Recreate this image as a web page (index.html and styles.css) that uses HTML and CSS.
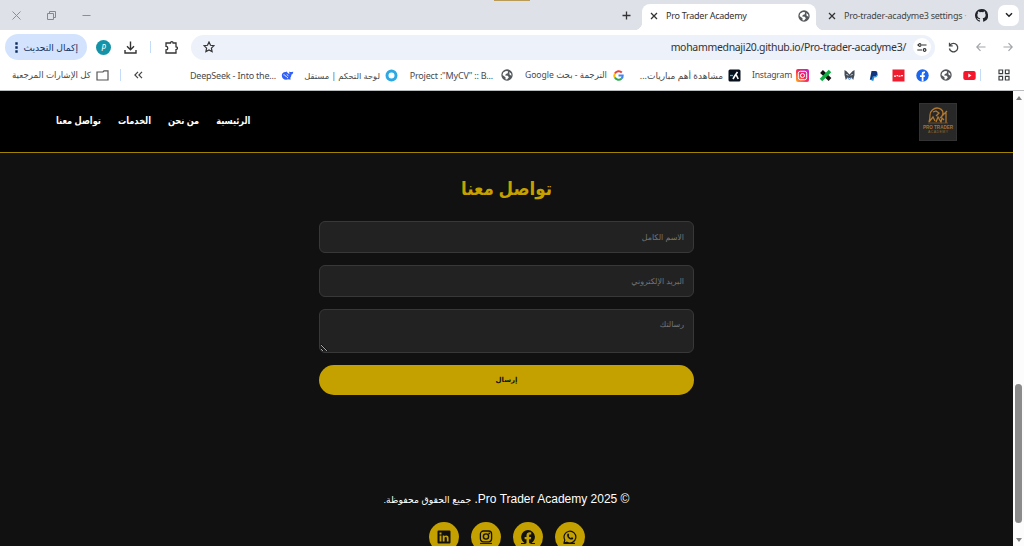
FILE: index.html
```html
<!DOCTYPE html>
<html lang="ar" dir="rtl">
	<head>
		<meta charset="UTF-8">
		<title>Pro Trader Academy</title>
		<link rel="stylesheet" href="styles.css">
	</head>
	<body>
		<svg class="defs">
			<symbol id="globe" viewBox="0 0 16 16">
				<circle cx="8" cy="8" r="7.6" fill="#54585c"/>
				<path d="M3 4.500 6.500 2.500l3 .5-.5 2.500-2.500 1-1 2 3.500.5 1.500 2-2.500 3-2-.5v-2.500L2 8zM11 4l2.500 2 .5 3-2.500-1.500z" fill="#fff"/>
			</symbol>
			<symbol id="close" viewBox="0 0 8 8">
				<path d="M1 1l6 6M7 1 1 7" fill="none" stroke="#333" stroke-width="1.300"/>
			</symbol>
		</svg>

		<!-- 标签栏 -->
		<div class="tabs">
			<div class="tab-menu"><svg width="8" height="6" viewBox="0 0 8 6"><path d="M1 1.200l3 3 3-3" fill="none" stroke="#222" stroke-width="1.500"/></svg></div>
			<div class="tab">
				<svg width="13" height="13" viewBox="0 0 16 16"><path fill="#202428" d="M8 0C3.600 0 0 3.600 0 8c0 3.500 2.300 6.500 5.500 7.600.4.100.5-.2.5-.4v-1.500c-2.200.5-2.700-1-2.700-1-.4-.9-.9-1.200-.9-1.200-.7-.5.100-.5.100-.5.800.1 1.200.8 1.200.8.7 1.200 1.900.9 2.300.7.100-.5.300-.9.500-1.100-1.800-.2-3.600-.9-3.600-4 0-.9.300-1.600.8-2.100-.1-.2-.4-1 .1-2.100 0 0 .7-.2 2.200.8a7.500 7.500 0 0 1 4 0c1.500-1 2.200-.8 2.200-.8.4 1.100.2 1.900.1 2.100.5.6.8 1.300.8 2.100 0 3.100-1.900 3.700-3.700 3.900.3.300.6.800.6 1.500v2.400c0 .2.100.5.600.4A8 8 0 0 0 8 0z"/></svg>
				<span class="tab-name fade">Pro-trader-acadyme3 settings <i>·</i></span>
				<svg width="8" height="8"><use href="#close"/></svg>
			</div>
			<div class="tab active">
				<svg width="12" height="12"><use href="#globe"/></svg>
				<span class="tab-name">Pro Trader Academy</span>
				<svg width="8" height="8"><use href="#close"/></svg>
			</div>
			<svg class="plus" width="9" height="9" viewBox="0 0 9 9"><path d="M4.500.5v8M.5 4.500h8" stroke="#333" stroke-width="1.300"/></svg>
			<div class="top-strip"></div>
			<div class="win">
				<svg width="9" height="9" viewBox="0 0 9 9"><path d="M.5 4.500h8" stroke="#8a8f95"/></svg>
				<svg width="9" height="9" viewBox="0 0 9 9"><path d="M.5 2.500h6v6h-6zM2.500 2.500v-2h6v6h-2" fill="none" stroke="#85898e"/></svg>
				<svg width="9" height="9" viewBox="0 0 9 9"><path d="M.5.5l8 8M8.500.5l-8 8" stroke="#8a8f95"/></svg>
			</div>
		</div>

		<!-- 地址栏 -->
		<div class="toolbar">
			<svg width="10" height="10" viewBox="0 0 10 10"><path d="M.5 5h8.500M5.500 1.200 9.200 5 5.500 8.800" fill="none" stroke="#a2a5a9" stroke-width="1.200"/></svg>
			<svg width="10" height="10" viewBox="0 0 10 10"><path d="M9.500 5H1M4.500 1.200.8 5l3.700 3.800" fill="none" stroke="#a2a5a9" stroke-width="1.200"/></svg>
			<svg width="11" height="11" viewBox="0 0 11 11"><path d="M2.200 3A4.200 4.200 0 1 1 1.400 6.500M1.500.8V3.800h3.200" fill="none" stroke="#44474a" stroke-width="1.300"/></svg>
			<div class="address">
				<div class="site"><svg width="10" height="9" viewBox="0 0 10 9"><path d="M.3 2h1.200M5 2h4.500M.3 7H5" stroke="#333" stroke-width="1.200"/><path d="M1.500 2a1.300 1.300 0 1 0 2.600 0 1.300 1.300 0 1 0-2.600 0M6.300 7a1.300 1.300 0 1 0 2.600 0 1.300 1.300 0 1 0-2.600 0" fill="none" stroke="#333" stroke-width="1.200"/></svg></div>
				<span class="url" dir="ltr">mohammednaji20.github.io/Pro-trader-acadyme3/</span>
				<svg class="star" width="12" height="12" viewBox="0 0 12 12"><path d="M6 1l1.500 3.300 3.500.4-2.600 2.400.7 3.500L6 8.900l-3.100 1.700.7-3.500L1 4.700l3.500-.4z" fill="none" stroke="#333" stroke-width="1.200"/></svg>
			</div>
			<svg class="puzzle" width="13" height="13" viewBox="0 0 13 13"><path d="M1 2h4.500a1.300 1.300 0 0 1 2.600 0H11v3.800a1.400 1.400 0 0 1 0 2.800V12H1V9a1.800 1.800 0 0 0 0-3.600z" fill="none" stroke="#333" stroke-width="1.300"/></svg>
			<i class="bar"></i>
			<svg class="down" width="13" height="13" viewBox="0 0 13 13"><path d="M6.500.5v8M3 5.200l3.500 3.500L10 5.200M1 9v3h11V9" fill="none" stroke="#333" stroke-width="1.400"/></svg>
			<div class="avatar">P</div>
			<div class="update"><span>إكمال التحديث</span><svg width="3" height="11" viewBox="0 0 3 11"><path d="M.3.300h2.400v2.400H.3zM.3 4.300h2.400v2.400H.3zM.3 8.300h2.400v2.400H.3z" fill="#0b2a5c"/></svg></div>
		</div>

		<!-- 书签栏 -->
		<div class="marks">
			<svg class="grid" width="12" height="12" viewBox="0 0 12 12"><path d="M1 1h3.600v3.600H1zM7.400 1H11v3.600H7.400zM1 7.400h3.600V11H1zM7.400 7.400H11V11H7.400z" fill="none" stroke="#3c4043" stroke-width="1.200"/></svg>
			<i class="bar"></i>
			<div class="icons">
				<svg width="13" height="13" viewBox="0 0 13 13"><rect x=".3" y="2" width="12.400" height="9" rx="2" fill="#f5162b"/><path d="M5.300 4.500 8.500 6.500l-3.200 2z" fill="#fff"/></svg>
				<svg width="12" height="12"><use href="#globe"/></svg>
				<svg width="13" height="13" viewBox="0 0 13 13"><circle cx="6.500" cy="6.500" r="6.200" fill="#1a66ee"/><path d="M5.700 12.600V8H4V6.200h1.700V5c0-1.900 1-2.700 3.300-2.400v1.600c-1-.1-1.500.1-1.500.9v1.100H9L8.700 8H7.500v4.600z" fill="#fff"/></svg>
				<svg width="13" height="13" viewBox="0 0 13 13"><rect x=".5" y=".5" width="12" height="12" fill="#ee1c2e"/><path d="M2 7.200h2M4.500 6.700h1.500M6.500 7.200h2M9 6.700h2" stroke="#fff" stroke-width="1.300"/></svg>
				<svg width="13" height="13" viewBox="0 0 13 13"><path d="M4.500 2h3.700c1.700 0 2.500 1.200 2.100 2.900C9.800 7 8.500 7.600 6.500 7.500L5.800 10.800H2.800z" fill="#12357f"/><path d="M10.500 4.200c.8 1.300.3 4.200-3.400 4.400L6.500 11.800H4.500l1.100-4.300C8 7.800 9.800 7 10.500 4.200z" fill="#1b8fd6"/></svg>
				<svg width="13" height="13" viewBox="0 0 13 13"><path d="M1.500 1l2 1.300 3 3.200 3-3.200 2-1.300v5l-1.300 5-1.700-2.500-2 .8-2-.8L2.800 11 1.500 6z" fill="#444c5a"/><path d="M3.500 5 5 6.500M9.500 5 8 6.500" stroke="#fff"/><path d="M4.500 9l2 1.500 2-1.500" fill="none" stroke="#4a88dd"/></svg>
				<svg width="13" height="13" viewBox="0 0 13 13"><path d="M2.500 2.500l8.500 8" stroke="#111" stroke-width="4"/><path d="M11 2 2 11" stroke="#14ad45" stroke-width="3.500"/></svg>
			</div>
			<div class="mark insta">
				<svg width="13" height="13" viewBox="0 0 13 13"><defs><linearGradient id="ig" x1="0" y1="1" x2="1" y2="0"><stop offset="0" stop-color="#ffb01c"/><stop offset=".5" stop-color="#f8265f"/><stop offset="1" stop-color="#c31fe0"/></linearGradient></defs><rect width="13" height="13" rx="2" fill="url(#ig)"/><rect x="2.300" y="2.300" width="8.400" height="8.400" rx="2" fill="none" stroke="#fff"/><circle cx="6.500" cy="6.500" r="2" fill="none" stroke="#fff"/></svg>
				<span dir="ltr">Instagram</span>
			</div>
			<div class="mark match">
				<svg width="13" height="13" viewBox="0 0 13 13"><rect x=".5" y=".5" width="12" height="12" rx="1.500" fill="#07101b"/><path d="M5 10 7 6.500 9.500 3M7 6.500h1.500l1.700 3.500" fill="none" stroke="#fff" stroke-width="1.600"/><path d="M2 6.500h3" stroke="#55a9d8" stroke-width="1.300"/></svg>
				<span>مشاهدة أهم مباريات...</span>
			</div>
			<div class="mark google">
				<svg width="13" height="13" viewBox="0 0 13 13" fill="none" stroke-width="2"><path d="M9.800 3.500A4.300 4.300 0 0 0 2.900 4.500" stroke="#ea4335"/><path d="M2.900 4.400a4.300 4.300 0 0 0 0 4.300" stroke="#fbbc05"/><path d="M2.900 8.600a4.300 4.300 0 0 0 6.500 1.200" stroke="#34a853"/><path d="M9.300 9.800c1-.8 1.500-2 1.400-3.300H6.500" stroke="#4285f4"/></svg>
				<span>الترجمة - بحث Google</span>
			</div>
			<div class="mark project">
				<svg width="12" height="12"><use href="#globe"/></svg>
				<span dir="ltr">Project :"MyCV" :: B...</span>
			</div>
			<div class="mark panel">
				<svg width="13" height="13" viewBox="0 0 13 13"><circle cx="6.500" cy="6.500" r="4.500" fill="none" stroke="#2ca9e4" stroke-width="3"/></svg>
				<span>لوحة التحكم | مستقل</span>
			</div>
			<div class="mark deep">
				<svg width="13" height="13" viewBox="0 0 13 13"><path d="M.8 6.500c0-2.500 2-3.800 4-3.500l1-.5.5 1c.8.500 1.500 1.400 2.200 1.600C8.300 4.200 8 3.300 8.300 2.500c.8.700 1.500.8 3.900.2-.1 1.800-.7 2.500-1.700 2.900-.2 2-.8 2.900-1.400 3.600.4.400.8.500 1 .8-1.100.7-2 .5-2.800.3C3.800 11.500.8 9.800.8 6.500z" fill="#3361f5"/><path d="M2.500 5.800c2 0 2.800 2.500 4.500 3.200M5.800 5.500l1.600 1.200" fill="none" stroke="#fff" stroke-width=".9"/></svg>
				<span dir="ltr">DeepSeek - Into the...</span>
			</div>
			<svg class="more" width="9" height="8" viewBox="0 0 9 8"><path d="M4 .8.9 4 4 7.200M8 .8 4.900 4 8 7.200" fill="none" stroke="#444" stroke-width="1.200"/></svg>
			<i class="bar"></i>
			<div class="mark all">
				<svg width="13" height="11" viewBox="0 0 13 11"><path d="M1 2h6l1-1.200h4V10H1z" fill="none" stroke="#555" stroke-width="1.200"/></svg>
				<span>كل الإشارات المرجعية</span>
			</div>
		</div>

		<div class="view">
			<div class="scroll">
				<i class="up"></i>
				<i class="thumb"></i>
				<i class="dn"></i>
			</div>
			<div class="page">
				<header>
					<svg class="logo" width="38" height="38" viewBox="0 0 38 38">
						<rect width="38" height="38" fill="#282828"/>
						<rect x=".5" y=".5" width="37" height="37" fill="none" stroke="#333"/>
						<path d="M10 19c1-3 1-5 1-7 0-4 4-7 7-7s6 2 6 5-2 4-3 5M10 19l4-5 2 4M14 9l3-1 3 2-3 3M17 19l2-5 3 5 1-4 2 2M22 14l6-6M27 9v11" fill="none" stroke="#b0782f" stroke-width="1.300"/>
						<path d="M9 20h20" stroke="#7b5426" stroke-width=".8"/>
						<text x="4" y="26.300" textLength="30" lengthAdjust="spacingAndGlyphs" class="logo-name">PRO TRADER</text>
						<text x="9" y="30" textLength="20" lengthAdjust="spacing" class="logo-sub">ACADEMY</text>
					</svg>
					<nav>
						<a>الرئيسية</a>
						<a>من نحن</a>
						<a>الخدمات</a>
						<a>تواصل معنا</a>
					</nav>
				</header>
				<section class="contact">
					<h2>تواصل معنا</h2>
					<form>
						<input type="text" placeholder="الاسم الكامل">
						<input type="email" placeholder="البريد الإلكتروني">
						<textarea placeholder="رسالتك"></textarea>
						<button type="button">إرسال</button>
					</form>
				</section>
				<footer>
					<p>© 2025 Pro Trader Academy. <span>جميع الحقوق محفوظة.</span></p>
					<div class="social">
						<a><svg width="14" height="14" viewBox="0 0 14 14"><path d="M1 13l.8-3A5.900 5.900 0 1 1 4 12.200zM1 13.300h11" fill="none" stroke="#111" stroke-width="1.200"/><path d="M4.600 3.800c.6-.5 1-.3 1.200.2l.4 1c0 .4-.4.600-.5.900.4.900 1.300 1.700 2.300 2 .4-.2.500-.7.900-.7l1.200.6c.4.500 0 1.300-.6 1.600-1.300.6-3-.2-4.200-1.400C4.100 6.800 3.600 5 4.600 3.800z" fill="#111"/></svg></a>
						<a><svg width="14" height="14" viewBox="0 0 14 14"><path d="M7 0a7 7 0 0 0-1.500 13.800V9.300H3.600V7h1.900V5.600c0-2.300 1.200-3.300 3.200-3.300.5 0 1.200.1 1.500.2v2H9.300c-1 0-1.200.5-1.200 1.200V7h2.100l-.4 2.300H8.100v4.600A7 7 0 0 0 7 0zM0 12.900h5.500v1H0zM8.100 12.900H14v1H8.100z" fill="#111"/></svg></a>
						<a><svg width="14" height="14" viewBox="0 0 14 14"><rect x="1.400" y="1" width="11.200" height="10.800" rx="3" fill="none" stroke="#111" stroke-width="1.300"/><circle cx="7" cy="6.500" r="2.600" fill="none" stroke="#111" stroke-width="1.400"/><circle cx="10.200" cy="3.400" r=".9" fill="#111"/><path d="M1 13.400h12" stroke="#111"/></svg></a>
						<a><svg width="14" height="14" viewBox="0 0 14 14"><path d="M1.500.5h11a1 1 0 0 1 1 1v11a1 1 0 0 1-1 1h-11a1 1 0 0 1-1-1v-11a1 1 0 0 1 1-1z" fill="#111"/><path d="M2.600 5.500h1.800v6H2.600zM2.500 2.600h2v1.800h-2zM5.700 5.500h1.700v.8c.9-1.400 4.200-1.400 4.200 1.600v3.600H9.800V8.300c0-1.700-2.200-1.600-2.200 0v3.200H5.700z" fill="#c5a100"/></svg></a>
					</div>
				</footer>
			</div>
		</div>
	</body>
</html>
```

FILE: styles.css
```css
*{
	box-sizing: border-box;
}
body{
	margin: 0;
	height: 546px;
	overflow: hidden;
	background: #fff;
	font-family: "Noto Sans","DejaVu Sans",sans-serif;
}
svg{
	display: block;
	flex: none;
}
.defs{
	position: absolute;
	width: 0;
	height: 0;
}
.tabs{
	display: flex;
	align-items: center;
	height: 30px;
	padding-right: 5px;
	background: #dee2e8;
	color: #444;
	font-size: 9px;
	letter-spacing: -.26px;
	position: relative;
}
.tab-menu{
	width: 21px;
	height: 21px;
	border-radius: 7px;
	background: #fff;
	display: flex;
	align-items: center;
	justify-content: center;
}
.tab{
	display: flex;
	align-items: center;
	width: 173px;
	height: 26px;
	margin-top: 1px;
	padding: 0 10px 0 0;
}
.tab-name{
	direction: ltr;
	white-space: nowrap;
}
.tab .fade{
	width: 123px;
	margin: 0 8px;
}
.fade i{
	color: #aaa;
	font-style: normal;
}
.tab.active{
	margin: 4px 9px 0 0;
	width: 174px;
	height: 26px;
	padding: 0 6px 3px 0;
	border-radius: 8px 8px 0 0;
	background: #fff;
	color: #333;
	position: relative;
}
.tab.active .tab-name{
	width: 123px;
	margin: 0 9px 0 8px;
}
.tab.active:before,.tab.active:after{
	content: "";
	position: absolute;
	bottom: 0;
	width: 8px;
	height: 8px;
}
.tab.active:before{
	right: -8px;
	background: radial-gradient(circle at 100% 0,#dee2e8 8px,#fff 8.5px);
}
.tab.active:after{
	left: -8px;
	background: radial-gradient(circle at 0 0,#dee2e8 8px,#fff 8.5px);
}
.plus{
	margin-right: 11px;
}
.top-strip{
	position: absolute;
	top: 0;
	left: 494px;
	width: 36px;
	height: 1px;
	background: #b99c58;
}
.win{
	display: flex;
	gap: 26px;
	margin-right: auto;
	padding-left: 12px;
}
.toolbar{
	display: flex;
	align-items: center;
	height: 34px;
	padding: 0 11px 0 5px;
	background: #fff;
}
.toolbar > svg + svg{
	margin-right: 17px;
}
.address{
	display: flex;
	align-items: center;
	width: 744px;
	height: 25px;
	margin-right: 13px;
	padding: 0 4px 0 12px;
	border-radius: 13px;
	background: #edf1fa;
}
.site{
	display: flex;
	align-items: center;
	justify-content: center;
	width: 18px;
	height: 18px;
	border-radius: 50%;
	background: #fff;
}
.url{
	margin-right: 7px;
	font-size: 10.5px;
	letter-spacing: -.32px;
	color: #333;
	white-space: nowrap;
}
.star{
	margin-right: auto;
}
.puzzle{
	margin-right: 13px;
}
.bar{
	flex: none;
	width: 1px;
	height: 12px;
	background: #c5dcf8;
}
.toolbar .bar{
	margin-right: 14px;
}
.down{
	margin-right: 13px;
}
.avatar{
	width: 15px;
	height: 15px;
	margin-right: 13px;
	border-radius: 50%;
	background: #1493a8;
	color: #fff;
	font-size: 8px;
	font-style: italic;
	line-height: 15px;
	text-align: center;
}
.update{
	display: flex;
	align-items: center;
	justify-content: space-between;
	width: 82px;
	height: 26px;
	margin-right: auto;
	padding: 0 9px 0 10px;
	border-radius: 13px;
	background: #d3e3fd;
	color: #16345f;
	font-size: 9.2px;
	white-space: nowrap;
}
.marks{
	display: flex;
	align-items: center;
	height: 27px;
	padding: 0 14px 4px 0;
	border-bottom: 1px solid #b9bcbc;
	font-size: 9px;
	color: #484b4e;
}
.marks .bar{
	margin-right: 17px;
}
.icons{
	display: flex;
	align-items: center;
	width: 157px;
	margin-right: 4px;
	justify-content: space-between;
}
.mark{
	display: flex;
	align-items: center;
	gap: 5px;
	margin-right: 11px;
	white-space: nowrap;
}
.mark [dir=ltr]{
	letter-spacing: -.2px;
}
.insta{ width: 57px; gap: 4px; margin-right: 10px; }
.insta span{ font-size: 8.600px; }
.match{ width: 102px; }
.google{ width: 101px; margin-right: 14px; }
.google span{ font-size: 8.600px; }
.project{ width: 104px; gap: 8px; }
.panel{ width: 93px; }
.panel span{ font-size: 8.400px; }
.deep{ width: 104px; }
.more{
	margin-right: 47px;
}
.marks .more + .bar{
	margin-right: 13px;
}
.all{
	width: 99px;
}
.all span{ font-size: 8.700px; }
.view{
	display: flex;
	height: 455px;
}
.scroll{
	display: flex;
	flex-direction: column;
	align-items: center;
	width: 11px;
	padding: 5px 0 4px;
	background: #fcfcfc;
}
.up,.dn{
	border: 3.5px solid transparent;
}
.up{
	border-top: 0;
	border-bottom: 4px solid #858585;
}
.dn{
	margin-top: auto;
	border-bottom: 0;
	border-top: 4px solid #858585;
}
.thumb{
	width: 7px;
	height: 139px;
	margin-top: 284px;
	border-radius: 4px;
	background: #8b8b8b;
}
.page{
	flex: 1;
	overflow: hidden;
	background: #111;
	font-family: "Liberation Sans","DejaVu Sans",sans-serif;
}
header{
	display: flex;
	align-items: center;
	justify-content: space-between;
	height: 62px;
	padding: 0 56px;
	border-bottom: 1px solid #a08300;
	background: #000;
}
.logo{
	direction: ltr;
}
.logo-name{
	font: bold 5px "Liberation Sans",sans-serif;
	fill: #a87230;
}
.logo-sub{
	font: 3.5px "Liberation Sans",sans-serif;
	fill: #94652f;
}
nav{
	display: flex;
	gap: 20.5px;
	padding-bottom: 2px;
	color: #fff;
	font-size: 10px;
	font-weight: bold;
	white-space: nowrap;
	transform: scaleX(.825);
	transform-origin: left;
}
.contact{
	width: 375px;
	height: 330px;
	margin: 0 auto;
}
h2{
	margin: 0;
	height: 68px;
	line-height: 71px;
	font-size: 19px;
	text-align: center;
	color: #c5a100;
	transform: scaleX(.88);
}
form{
	display: flex;
	flex-direction: column;
	gap: 12px;
}
input,textarea{
	display: block;
	width: 100%;
	height: 32px;
	padding: 9px;
	border: 1px solid #383838;
	border-radius: 6px;
	background: #222;
	color: #fff;
	font-family: "Liberation Sans","DejaVu Sans",sans-serif;
	font-size: 7.900px;
}
textarea{
	height: 44px;
	padding-top: 10px;
}
::placeholder{
	color: #757575;
}
button{
	height: 30px;
	border: 0;
	border-radius: 15px;
	background: #c5a100;
	color: #111;
	font: bold 7px "Liberation Sans","DejaVu Sans",sans-serif;
}
footer{
	color: #fff;
	text-align: center;
}
footer p{
	margin: 0;
	height: 39px;
	line-height: 33px;
	font-size: 12px;
}
footer span{
	font-size: 9.300px;
}
.social{
	display: flex;
	justify-content: center;
	gap: 12px;
}
.social a{
	display: flex;
	align-items: center;
	justify-content: center;
	width: 30px;
	height: 30px;
	border-radius: 50%;
	background: #c5a100;
}
```
